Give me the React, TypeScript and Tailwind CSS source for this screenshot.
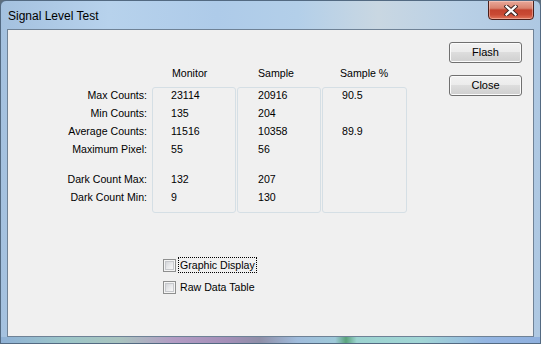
import React from "react";

const rows: (string[] | null)[] = [
  ["Max Counts:", "23114", "20916", "90.5"],
  ["Min Counts:", "135", "204", ""],
  ["Average Counts:", "11516", "10358", "89.9"],
  ["Maximum Pixel:", "55", "56", ""],
  null,
  ["Dark Count Max:", "132", "207", ""],
  ["Dark Count Min:", "9", "130", ""],
];

function Column({
  header,
  idx,
  width,
  boxed,
  headerPad,
  valuePad,
  alignRight,
}: {
  header: string;
  idx: number;
  width: string;
  boxed: boolean;
  headerPad: string;
  valuePad: string;
  alignRight?: boolean;
}) {
  return (
    <div className={`flex flex-col ${width}`}>
      <div className={`h-[18px] leading-[18px] whitespace-nowrap ${headerPad}`}>{header}</div>
      <div
        className={`mt-[5px] h-[126px] border rounded-[3px] ${
          boxed ? "border-[#d5dfe5]" : "border-transparent"
        }`}
      >
        <div className="mt-[-2px] flex flex-col">
          {rows.map((r, i) =>
            r === null ? (
              <div key={i} className="h-[12px]" />
            ) : (
              <div
                key={i}
                className={`h-[18px] leading-[18px] whitespace-nowrap ${valuePad} ${
                  alignRight ? "text-right" : ""
                }`}
              >
                {r[idx]}
              </div>
            )
          )}
        </div>
      </div>
    </div>
  );
}

function Checkbox({ label, focused }: { label: string; focused?: boolean }) {
  return (
    <div className="flex items-center h-[16px]">
      <div className="w-[13px] h-[13px] border border-[#8e8f8f] bg-[#f4f4f4] flex items-center justify-center">
        <div className="w-[9px] h-[9px] border border-[#c6c8cc] bg-[linear-gradient(135deg,#d4d6da_0%,#e8e9eb_50%,#f8f8f8_100%)]" />
      </div>
      <div
        className={`ml-[2px] px-[1px] h-[16px] leading-[15px] border ${
          focused ? "border-dotted border-[#000]" : "border-transparent"
        }`}
      >
        {label}
      </div>
    </div>
  );
}

function WinButton({ label }: { label: string }) {
  return (
    <div className="w-[73px] h-[21px] rounded-[3px] border border-[#707070] bg-[linear-gradient(to_bottom,#f2f2f2_0%,#ebebeb_50%,#dddddd_50%,#cfcfcf_100%)] shadow-[inset_0_0_0_1px_#fbfbfb] flex items-center justify-center text-[11px] text-black">
      {label}
    </div>
  );
}

export default function App() {
  return (
    <div className="w-[541px] h-[344px] bg-[#5d6e7e]">
      <div
        className="w-[541px] h-[344px] rounded-t-[6px] border border-[#536a82] flex flex-col overflow-hidden bg-[linear-gradient(to_right,#a4c1df_0%,#b7d2ec_20%,#aecbe9_40%,#b3cfe9_55%,#c9d7e2_70%,#b9d0e6_85%,#aec8e2_100%)]"
        style={{ fontFamily: '"Liberation Sans", Arial, sans-serif' }}
      >
        {/* Title bar */}
        <div className="h-[28px] flex items-start justify-between">
          <div className="pl-[7px] pt-[7px] text-[12px] text-black leading-[16px]">Signal Level Test</div>
          <div className="mr-[6px] mt-[-1px] w-[46px] h-[20px] rounded-b-[4px] border border-[#4a1f1a] bg-[linear-gradient(to_bottom,#e9a99a_0%,#d9826e_40%,#c3432e_50%,#c94a34_75%,#e0745a_100%)] shadow-[inset_0_0_0_1px_rgba(255,220,210,0.45)] flex items-center justify-center">
            <svg width="14" height="11" viewBox="0 0 14 11">
              <path d="M2.5 1.5 L11.5 9.5 M11.5 1.5 L2.5 9.5" stroke="#3d2522" strokeWidth="4.2" strokeLinecap="square" />
              <path d="M2.5 1.5 L11.5 9.5 M11.5 1.5 L2.5 9.5" stroke="#ffffff" strokeWidth="2.3" strokeLinecap="square" />
            </svg>
          </div>
        </div>

        {/* Client */}
        <div className="flex-1 px-[6px]">
          <div className="h-[308px] border border-[#6f8296] bg-[#f0f0f0] flex text-[10.6px] text-black">
            <div className="flex-1 flex flex-col pt-[34px]">
              <div className="flex">
                <div className="w-[4px]" />
                <Column header="" idx={0} width="w-[136px]" boxed={false} headerPad="" valuePad="" alignRight />
                <div className="w-[4px]" />
                <Column header="Monitor" idx={1} width="w-[84px]" boxed headerPad="pl-[20px]" valuePad="pl-[18px]" />
                <div className="w-[1px]" />
                <Column header="Sample" idx={2} width="w-[84px]" boxed headerPad="pl-[21px]" valuePad="pl-[20px]" />
                <div className="w-[1px]" />
                <Column header="Sample %" idx={3} width="w-[85px]" boxed headerPad="pl-[18px]" valuePad="pl-[19px]" />
              </div>
              <div className="mt-[44px] pl-[155px] flex flex-col gap-[6px]">
                <Checkbox label="Graphic Display" focused />
                <Checkbox label="Raw Data Table" />
              </div>
            </div>
            <div className="flex flex-col gap-[12px] pt-[12px] pr-[11px]">
              <WinButton label="Flash" />
              <WinButton label="Close" />
            </div>
          </div>
        </div>

        {/* Bottom frame */}
        <div className="h-[6px] bg-[linear-gradient(to_right,#8fb1d6_0%,#9cc6c8_12%,#a9c4bf_22%,#b39cc4_32%,#a48fb8_42%,#8f8fa8_48%,#a0bcdc_55%,#9ec9d9_62%,#5aa37c_64%,#9cd3d0_66%,#a2d6d6_78%,#94b5e2_90%,#8fb0de_100%)]" />
      </div>
    </div>
  );
}
